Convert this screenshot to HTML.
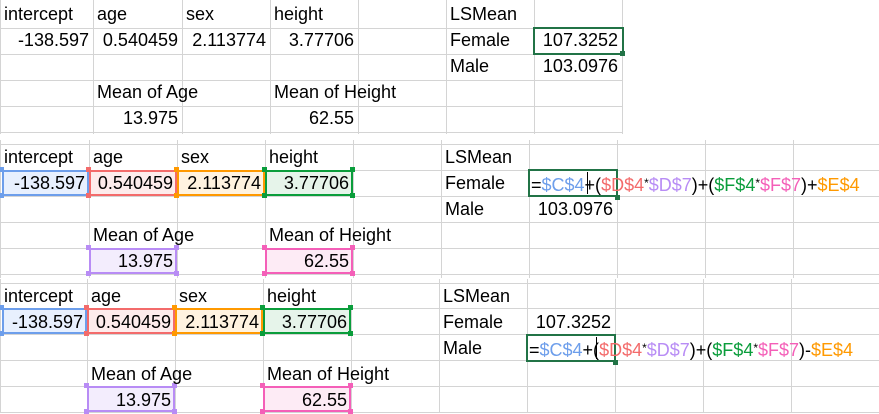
<!DOCTYPE html><html><head><style>
body{margin:0;width:879px;height:413px;overflow:hidden;background:#fff;position:relative;font-family:"Liberation Sans",Arial,sans-serif;font-size:18px;color:#000}
.l{position:absolute;background:#d4d4d4}
.t{position:absolute;white-space:nowrap;line-height:27px;height:26px}
.b{position:absolute;box-sizing:border-box;border:2px solid}
.c{position:absolute;width:5px;height:5px}
</style></head><body>
<div id="r"></div>
<script>
var R=document.getElementById('r');
function add(h){R.insertAdjacentHTML('beforeend',h);}
function grid(cols,rows,y0,y1,x1){
 cols.forEach(function(x){add('<div class="l" style="left:'+x+'px;top:'+y0+'px;width:1px;height:'+(y1-y0)+'px"></div>');});
 rows.forEach(function(y){add('<div class="l" style="left:0;top:'+y+'px;width:'+x1+'px;height:1px"></div>');});
}
function txt(x,y,w,s,right,extra){
 add('<div class="t" style="left:'+x+'px;top:'+y+'px;width:'+w+'px;text-align:'+(right?'right':'left')+';'+(extra||'')+'">'+s+'</div>');
}
function box(x,y,w,h,col,fill){
 add('<div class="b" style="left:'+x+'px;top:'+y+'px;width:'+w+'px;height:'+h+'px;border-color:'+col+';background:'+fill+'"></div>');
 [[x,y],[x+w,y],[x,y+h],[x+w,y+h]].forEach(function(p){add('<div class="c" style="left:'+(p[0]-3)+'px;top:'+(p[1]-3)+'px;background:'+col+'"></div>');});
}
var C1=[0,93,182,270,358,446,534,622],R1=[28,54,80,106,132];
grid(C1,R1,0,134,623);
function vals(C,ry){
 txt(C[0]+4,ry[0],80,'intercept');txt(C[1]+4,ry[0],80,'age');txt(C[2]+4,ry[0],80,'sex');txt(C[3]+4,ry[0],80,'height');
 txt(C[0],ry[1],C[1]-C[0]-4,'-138.597',1);txt(C[1],ry[1],C[2]-C[1]-4,'0.540459',1);txt(C[2],ry[1],C[3]-C[2]-4,'2.113774',1);txt(C[3],ry[1],C[4]-C[3]-4,'3.77706',1);
 txt(C[1]+4,ry[3],160,'Mean of Age');txt(C[3]+4,ry[3],160,'Mean of Height');
 txt(C[1],ry[4],C[2]-C[1]-4,'13.975',1);txt(C[3],ry[4],C[4]-C[3]-4,'62.55',1);
 txt(C[5]+4,ry[0],80,'LSMean');txt(C[5]+4,ry[1],80,'Female');txt(C[5]+4,ry[2],80,'Male');
}
vals(C1,[1,27,53,79,105]);
add('<div class="b" style="left:533px;top:27px;width:91px;height:28px;border-color:#217346"></div><div class="c" style="left:620px;top:51px;background:#217346"></div>');
txt(534,27,84,'107.3252',1);txt(534,53,84,'103.0976',1);
function boxes(C,ry){
 var y=ry[1],h=26;
 box(C[0]+2,y,C[1]-C[0]-2,h,'#6d9eeb','#e8f0fe');
 box(C[1],y,C[2]-C[1],h,'#f36b6b','#fdecec');
 box(C[2],y,C[3]-C[2],h,'#ff9900','#fff3e0');
 box(C[3],y,C[4]-C[3],h,'#0a9d3b','#e6f4ea');
 box(C[1],ry[4],C[2]-C[1],h,'#b88cf5','#f3edfd');
 box(C[3],ry[4],C[4]-C[3],h,'#f45fb8','#fdebf5');
}
function formula(x,y,op){
 return '<div class="t" style="left:'+x+'px;top:'+y+'px">=<span style="color:#6d9eeb">$C$4</span>+(<span style="color:#f36b6b">$D$4</span><span style="font-size:12px;vertical-align:4px">*</span><span style="color:#b88cf5">$D$7</span>)+(<span style="color:#0a9d3b">$F$4</span><span style="font-size:12px;vertical-align:4px">*</span><span style="color:#f45fb8">$F$7</span>)'+op+'<span style="color:#ff9900">$E$4</span></div>';
}
var C2=[0,89,177,265,353,441,529,617,705,793],R2=[144,170,196,222,248,274];
grid(C2,R2,140,278,879);
boxes(C2,[144,170,196,222,248]);
vals(C2,[144,170,196,222,248]);
add('<div style="position:absolute;left:528px;top:169px;width:90px;height:28px;background:#fff"></div>');
add('<div class="b" style="left:528px;top:169px;width:90px;height:28px;border-color:#217346"></div><div class="c" style="left:615px;top:195px;background:#217346"></div>');
add(formula(531,170,'+'));
add('<div style="position:absolute;left:587px;top:172px;width:1px;height:22px;background:#000"></div>');
txt(529,196,84,'103.0976',1);
var C3=[0,87,175,263,351,439,527,615,703,791],R3=[283,308,334,360,386,412];
grid(C3,R3,279,413,879);
boxes(C3,[282,308,334,360,386]);
vals(C3,[283,309,335,361,387]);
txt(527,309,84,'107.3252',1);
add('<div style="position:absolute;left:526px;top:334px;width:90px;height:28px;background:#fff"></div>');
add('<div class="b" style="left:526px;top:334px;width:90px;height:28px;border-color:#217346"></div><div class="c" style="left:613px;top:360px;background:#217346"></div>');
add(formula(529,335,'-'));
add('<div style="position:absolute;left:596px;top:337px;width:1px;height:22px;background:#000"></div>');
</script>
</body></html>
